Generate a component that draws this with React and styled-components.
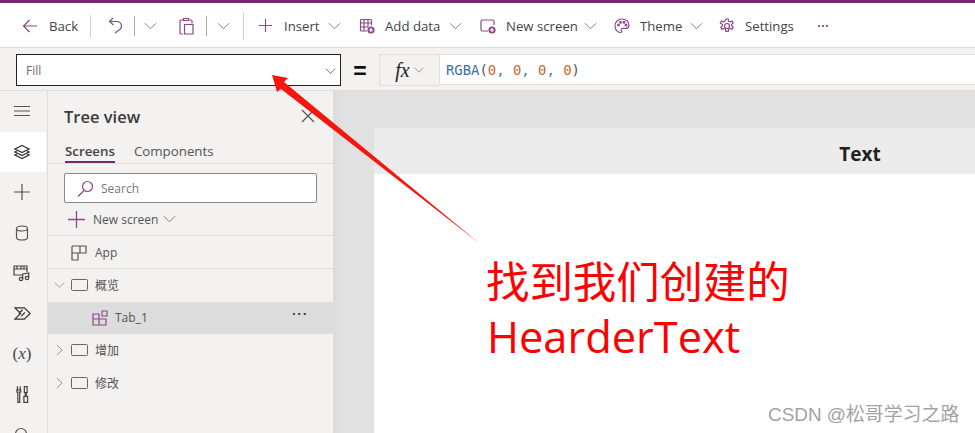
import React from "react";
import styled, { createGlobalStyle } from "styled-components";

const Global = createGlobalStyle`
  html, body { margin: 0; padding: 0; background: #fff; }
  body { font-family: "Open Sans", "Noto Sans CJK SC", sans-serif; }
`;
const Page = styled.div`
  position: relative; width: 975px; height: 433px; overflow: hidden;
  display: flex; flex-direction: column; background: #fff; color: #444;
`;
const Accent = styled.div`height: 3px; background: #742774; flex: none;`;
const Toolbar = styled.div`
  height: 45px; flex: none; display: flex; align-items: center; padding: 1px 0 0 22px;
  border-bottom: 1px solid #dedcda; box-sizing: border-box; background: #fff;
`;
const Tool = styled.div`
  display: flex; align-items: center; font-size: 13.2px; color: #444; white-space: nowrap; flex: none;
`;
const Label = styled.span`margin-left: ${p => p.$ml || 10}px; width: ${p => p.$w}px; display: inline-block; white-space: nowrap;`;
const Sep = styled.div`
  width: 1px; height: ${p => p.$h}px; background: ${p => p.$c || "#d0cfce"}; margin-left: ${p => p.$ml}px; flex: none;
`;
const Svg = styled.svg`
  width: ${p => p.$s}px; height: ${p => p.$h || p.$s}px; flex: none; fill: none; stroke: ${p => p.$c || "#8a4a8a"};
  stroke-width: ${p => p.$w || 1.2}; margin-left: ${p => p.$ml || 0}px; display: block;
`;
const Chev = styled(Svg).attrs({ viewBox: "0 0 14 8" })`
  width: ${p => p.$s || 13}px; height: 8px; stroke: ${p => p.$c || "#777"}; stroke-width: 1;
`;
const ChevronDown = p => <Chev {...p}><path d="M1 1l6 6 6-6" /></Chev>;
const ChevronRight = p => (
  <Svg viewBox="0 0 8 14" $s={12} $c="#8a8886" $w={1} {...p}><path d="M1.500 1l6 6-6 6" /></Svg>
);

const FormulaBar = styled.div`
  height: 43px; flex: none; box-sizing: border-box; background: #f3f2f1; border-bottom: 1px solid #dedcda;
  display: flex; align-items: flex-start; padding-top: 6px; padding-left: 16px;
`;
const PropBox = styled.div`
  width: 325px; height: 32px; box-sizing: border-box; border: 1px solid #222; background: #fff;
  display: flex; align-items: center; justify-content: space-between; padding: 1px 4px 0 9px;
  font-size: 12px; color: #6d6d6d;
`;
const Equals = styled.div`
  width: 38px; height: 32px; display: flex; align-items: center; justify-content: center; padding-top: 3px; box-sizing: border-box; font-size: 23px; color: #111; font-family: "Liberation Sans", sans-serif; font-weight: 700;
`;
const FxBox = styled.div`
  width: 60px; height: 32px; box-sizing: border-box; border: 1px solid #e1dfdd; border-right: 0; background: #f3f2f1;
  display: flex; align-items: center; justify-content: center; gap: 4px; font-family: "Liberation Serif", serif; font-style: italic; font-size: 20px; color: #222;
`;
const FormulaInput = styled.div`
  flex: 1; height: 31px; box-sizing: border-box; background: #fff; border-top: 1px solid #e1dfdd; border-bottom: 1px solid #e1dfdd;
  border-left: 1px solid #e1dfdd;
  display: flex; align-items: center; padding-left: 6px; font-family: "DejaVu Sans Mono", monospace; font-size: 13.9px; white-space: pre;
`;
const Tok = styled.span`color: ${p => p.$c};`;

const Main = styled.div`flex: 1; display: flex; min-height: 0;`;
const Rail = styled.div`
  width: 48px; flex: none; box-sizing: border-box; border-right: 1px solid #e1dfdd; background: #f3f2f1; display: flex; flex-direction: column;
`;
const RailBtn = styled.div`
  width: 46px; height: 40.5px; box-sizing: border-box; padding-right: 2px; flex: none; display: flex; align-items: center; justify-content: center; background: ${p => p.$active ? "#fff" : "transparent"};
`;
const XVar = styled.span`font-family: "Liberation Serif", serif; font-size: 17px; color: #444;`;
const Panel = styled.div`
  width: 285px; flex: none; background: #f3f2f1; display: flex; flex-direction: column;
`;
const PanelHead = styled.div`
  height: 50px; flex: none; display: flex; align-items: center; justify-content: space-between; padding: 0 18px 0 16px;
  font-size: 16.5px; font-weight: 600; color: #3b3a39;
`;
const Tabs = styled.div`
  height: 23px; flex: none; box-sizing: border-box; display: flex; gap: 19px; padding-left: 17px; border-bottom: 1px solid #e1dfdd; font-size: 13.3px; color: #555;
`;
const TabItem = styled.div`
  height: 22px; box-sizing: border-box; line-height: 20px; border-bottom: ${p => p.$on ? "2px solid #742774" : "0"}; font-weight: ${p => p.$on ? 600 : 400}; color: ${p => p.$on ? "#444" : "#555"};
`;
const SearchWrap = styled.div`padding: 9px 16px 0; flex: none;`;
const SearchBox = styled.div`
  height: 30px; box-sizing: border-box; border: 1px solid #8a8886; border-radius: 2px; background: #fff; display: flex; align-items: center; padding-left: 12px; gap: 7px; font-size: 12px; color: #777;
`;
const NewRow = styled.div`
  height: 33px; flex: none; box-sizing: border-box; border-bottom: 1px solid #e1dfdd; display: flex; align-items: center; padding-left: 20px; font-size: 12px; color: #555;
`;
const AppRow = styled.div`
  height: 33px; flex: none; box-sizing: border-box; border-bottom: 1px solid #e1dfdd; display: flex; align-items: center; padding: 1px 0 0 23px; font-size: 12px; color: #555; gap: 8px;
`;
const TreeRow = styled.div`
  height: 32.5px; flex: none; box-sizing: border-box; display: flex; align-items: center; padding-left: ${p => p.$indent}px; padding-right: 25px;
  background: ${p => p.$sel ? "#dcdcdc" : "transparent"}; font-size: 12px; color: #555;
`;
const Frame = styled.div`
  width: 17px; height: 12px; box-sizing: border-box; border: 1.3px solid #666; border-radius: 1.5px; margin: 0 7px 0 6px; flex: none;
`;
const RowDots = styled.div`margin-left: auto; font-size: 14px; letter-spacing: 1.5px; color: #333; line-height: 1; transform: translateY(-4px); font-weight: 600;`;
const Canvas = styled.div`
  flex: 1; min-width: 0; overflow: hidden; background: linear-gradient(90deg, #dcdcdc, #e1e1e1 12px); padding: 37px 0 0 41px;
`;
const Screen = styled.div`width: 972px; height: 400px; background: #fff;`;
const ScreenHead = styled.div`
  height: 46px; box-sizing: border-box; padding-top: 5px; background: #ececec; display: flex; align-items: center; justify-content: center; font-size: 19px; font-weight: 700; color: #222;
`;
const Note = styled.div`
  position: absolute; left: 486px; top: 252px; color: #f00; font-family: "Noto Sans CJK SC", "Noto Sans", sans-serif; font-size: 43.4px; line-height: 55px; white-space: nowrap;
`;
const NoteLatin = styled.div`font-family: "Open Sans", sans-serif; font-size: 43.4px; margin-top: 2px; padding-left: 1px;`;
const Watermark = styled.div`
  position: absolute; left: 768px; top: 404px; color: #a3a3a3; font-family: "Liberation Sans", "Noto Sans CJK SC", sans-serif; font-size: 18.9px; line-height: 22px; white-space: nowrap;
`;
const Overlay = styled.svg`position: absolute; left: 0; top: 0; width: 975px; height: 433px; pointer-events: none;`;

const PlusBadge = () => (
  <>
    <circle cx="12" cy="12" r="3.600" fill="#8a4a8a" stroke="none" />
    <path d="M12 10v4M10 12h4" stroke="#fff" />
  </>
);

export default function App() {
  return (
    <Page>
      <Global />
      <Accent />
      <Toolbar>
        <Tool>
          <Svg viewBox="0 0 16 16" $s={16}><path d="M15 8H1.500M7.500 2L1.500 8l6 6" /></Svg>
          <Label $ml={11} $w={28}>Back</Label>
        </Tool>
        <Sep $ml={13} $h={22} />
        <Svg viewBox="0 0 15 17" $s={15} $h={17} $ml={17}><path d="M5 1L1.500 4.500 5.500 8M1.500 4.500H9a4.500 4.500 0 0 1 2 8.500L7 16" /></Svg>
        <Sep $ml={11} $h={20} $c="#aaa" />
        <ChevronDown $ml={9} />
        <Svg viewBox="0 0 15 18" $s={15} $h={18} $ml={22}><path d="M4 3H2a1 1 0 0 0-1 1v12a1 1 0 0 0 1 1h2M4.500 3.500V1.500h5v2zM10 3h2a1 1 0 0 1 1 1v2.500M5.500 7.500h8.500V17H5.500z" /></Svg>
        <Sep $ml={12} $h={20} $c="#aaa" />
        <ChevronDown $ml={10} />
        <Sep $ml={13} $h={28} />
        <Svg viewBox="0 0 16 16" $s={15} $ml={14}><path d="M8 1v14M1 8h14" /></Svg>
        <Tool><Label $ml={11} $w={35}>Insert</Label></Tool>
        <ChevronDown $ml={9} />
        <Svg viewBox="0 0 16 16" $s={16} $ml={18}>
          <path d="M8 13H2.500a1 1 0 0 1-1-1V2.500a1 1 0 0 1 1-1h9a1 1 0 0 1 1 1V7M1.500 5H12.500M1.500 9H9M5 1.500V13M9 1.500V9" />
          <PlusBadge />
        </Svg>
        <Tool><Label $ml={10} $w={55}>Add data</Label></Tool>
        <ChevronDown $ml={9} />
        <Svg viewBox="0 0 16 16" $s={16} $ml={18}>
          <path d="M8 13H2.500a1.500 1.500 0 0 1-1.500-1.500v-8A1.500 1.500 0 0 1 2.500 2h10A1.500 1.500 0 0 1 14 3.500V7" />
          <PlusBadge />
        </Svg>
        <Tool><Label $ml={10} $w={70}>New screen</Label></Tool>
        <ChevronDown $ml={8} />
        <Svg viewBox="0 0 16 16" $s={16} $ml={17}>
          <path d="M8 1C4 1 1 4 1 8c0 3.500 2.500 6.500 5.500 6.500 1.500 0 1.500-1.200 1-2-.6-1 0-2.200 1.500-2.200h3c1.800 0 3-1 3-3C15 3.500 12 1 8 1z" />
          <circle cx="4.500" cy="7" r=".9" /><circle cx="6.500" cy="4.200" r=".9" /><circle cx="10" cy="4.200" r=".9" /><circle cx="12" cy="7" r=".9" />
        </Svg>
        <Tool><Label $ml={10} $w={41}>Theme</Label></Tool>
        <ChevronDown $ml={9} />
        <Svg viewBox="0 0 16 16" $s={16} $ml={16}>
          <circle cx="8" cy="8" r="2.500" />
          <path d="M6.800 1h2.400l.4 2 1.500.8 1.900-.8 1.200 2-1.500 1.300v1.600l1.500 1.400-1.200 2-1.900-.8-1.500.8-.4 2H6.800l-.4-2-1.500-.8-1.900.8-1.200-2 1.500-1.400V6.300L1.300 5l1.200-2 1.900.8 1.500-.8z" />
        </Svg>
        <Tool><Label $ml={10} $w={49}>Settings</Label></Tool>
        <Svg viewBox="0 0 12 4" $s={12} $ml={23}><g fill="#742774" stroke="none"><circle cx="2" cy="2" r="1" /><circle cx="6" cy="2" r="1" /><circle cx="10" cy="2" r="1" /></g></Svg>
      </Toolbar>
      <FormulaBar>
        <PropBox>Fill<ChevronDown $c="#555" $s={11} /></PropBox>
        <Equals>=</Equals>
        <FxBox>fx<ChevronDown $s={10} /></FxBox>
        <FormulaInput>
          <Tok $c="#3f6fa8">RGBA</Tok><Tok $c="#555">(</Tok><Tok $c="#c46a2e">0</Tok><Tok $c="#1f8a8c">, </Tok><Tok $c="#c46a2e">0</Tok><Tok $c="#1f8a8c">, </Tok><Tok $c="#c46a2e">0</Tok><Tok $c="#1f8a8c">, </Tok><Tok $c="#c46a2e">0</Tok><Tok $c="#555">)</Tok>
        </FormulaInput>
      </FormulaBar>
      <Main>
        <Rail>
          <RailBtn><Svg viewBox="0 0 16 16" $s={16} $c="#555"><path d="M0 3.500h16M0 8h16M0 12.500h16" /></Svg></RailBtn>
          <RailBtn $active><Svg viewBox="0 0 16 16" $s={16} $c="#333"><path d="M8 1.500l7 3.500-7 3.500L1 5zM2.800 7L1 8l7 3.500L15 8l-1.800-1M2.800 10L1 11l7 3.500 7-3.500-1.800-1" /></Svg></RailBtn>
          <RailBtn><Svg viewBox="0 0 16 16" $s={16} $c="#555"><path d="M8 0v16M0 8h16" /></Svg></RailBtn>
          <RailBtn><Svg viewBox="0 0 16 16" $s={16} $c="#555"><ellipse cx="8" cy="3.500" rx="5.500" ry="2.500" /><path d="M2.500 3.500v9c0 1.400 2.500 2.500 5.500 2.500s5.500-1.100 5.500-2.500v-9" /></Svg></RailBtn>
          <RailBtn><Svg viewBox="0 0 18 18" $s={18} $c="#444"><path d="M9 11H1V2h13v6M1 5h13M4 2v3M8 2v3M11 2v3" /><circle cx="8" cy="15" r="1.700" /><circle cx="14" cy="14" r="1.700" /><path d="M9.700 15V10l6-1v5" /></Svg></RailBtn>
          <RailBtn><Svg viewBox="0 0 18 16" $s={17} $c="#333" $w={1.3}><path d="M1 2h10l6 6-6 6H1l6-6zM5 8l4-4M7.500 11l4-4" /></Svg></RailBtn>
          <RailBtn><XVar>(<i>x</i>)</XVar></RailBtn>
          <RailBtn><Svg viewBox="0 0 14 20" $s={13} $h={19} $c="#444" $w={1.3}><path d="M1.500 1v4M4.500 1v4M1 5h4v2.500H4v11H2v-11H1zM9 1.500h3V8h-1v4h1.500v6.500h-4V12H10V8h-1z" /></Svg></RailBtn>
          <RailBtn><Svg viewBox="0 0 16 16" $s={16} $c="#555"><circle cx="7" cy="7" r="5.500" /><path d="M11 11l5 5" /></Svg></RailBtn>
        </Rail>
        <Panel>
          <PanelHead>
            <span>Tree view</span>
            <Svg viewBox="0 0 14 14" $s={14} $c="#555"><path d="M1 1l12 12M13 1L1 13" /></Svg>
          </PanelHead>
          <Tabs>
            <TabItem $on>Screens</TabItem>
            <TabItem>Components</TabItem>
          </Tabs>
          <SearchWrap>
            <SearchBox>
              <Svg viewBox="0 0 17 17" $s={17}><circle cx="10.500" cy="6.500" r="5" /><path d="M7 10.500L1 16.500" /></Svg>
              Search
            </SearchBox>
          </SearchWrap>
          <NewRow>
            <Svg viewBox="0 0 16 16" $s={17}><path d="M8 0v16M0 8h16" /></Svg>
            <Label $ml={8} $w={62}>New screen</Label>
            <ChevronDown $ml={8} />
          </NewRow>
          <AppRow>
            <Svg viewBox="0 0 16 16" $s={16} $c="#555"><path d="M1 1h8v7h6v-7H9M1 1v14h6v-7H1M9 8H7v7" /></Svg>
            App
          </AppRow>
          <TreeRow $indent={6}>
            <ChevronDown $s={11} $c="#8a8886" />
            <Frame />概览
          </TreeRow>
          <TreeRow $indent={44} $sel>
            <Svg viewBox="0 0 16 16" $s={16} $w={1.2}><path d="M1 4h6v5H1zM1 9h6v6H1zM7 9h7v6H7zM7 4v5M10 1h5v5h-5z" /></Svg>
            <Label $ml={7}>Tab_1</Label>
            <RowDots>···</RowDots>
          </TreeRow>
          <TreeRow $indent={5}>
            <ChevronRight />
            <Frame />增加
          </TreeRow>
          <TreeRow $indent={5}>
            <ChevronRight />
            <Frame />修改
          </TreeRow>
        </Panel>
        <Canvas>
          <Screen>
            <ScreenHead>Text</ScreenHead>
          </Screen>
        </Canvas>
      </Main>
      <Overlay viewBox="0 0 975 433">
        <polygon points="272,75 288,78 284,82 479,243 281,89 277,92" fill="#f5170f" />
      </Overlay>
      <Note>
        找到我们创建的
        <NoteLatin>HearderText</NoteLatin>
      </Note>
      <Watermark>CSDN @松哥学习之路</Watermark>
    </Page>
  );
}
